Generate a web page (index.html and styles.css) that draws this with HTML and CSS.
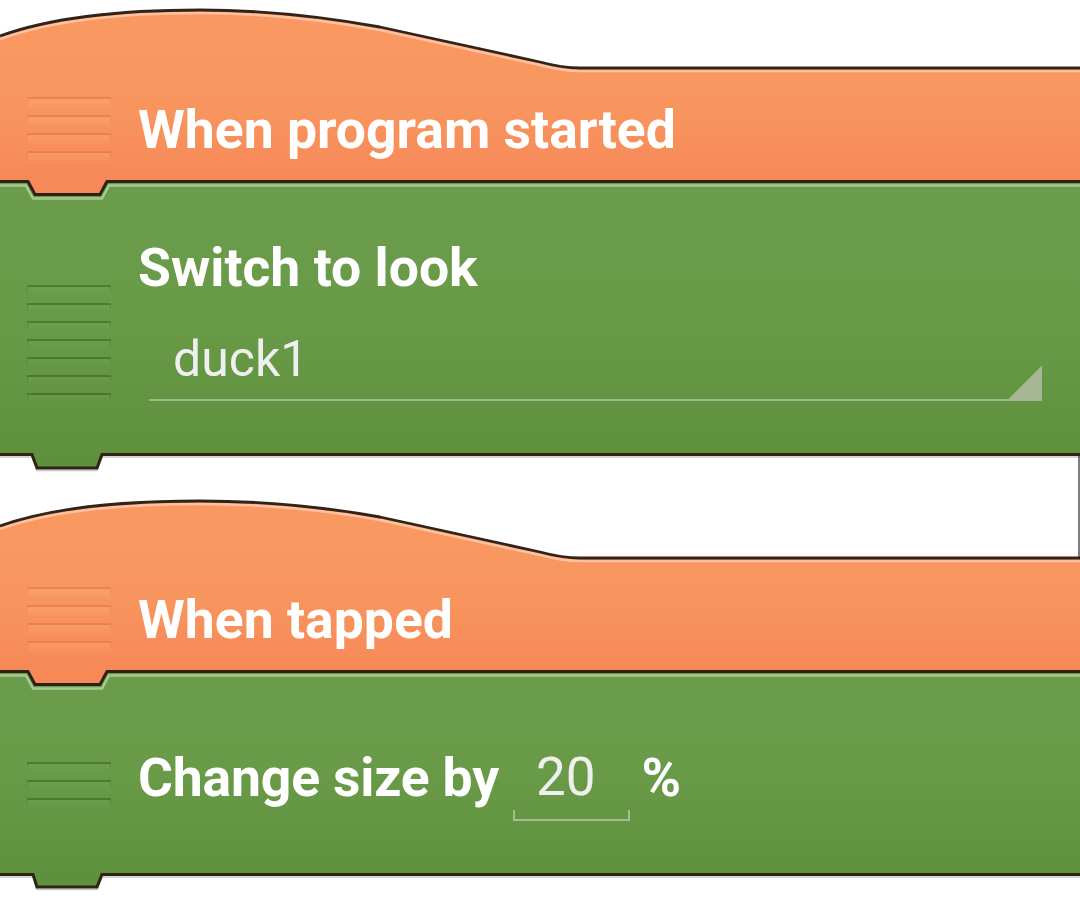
FILE: index.html
```html
<!DOCTYPE html>
<html lang="en">
<head>
<meta charset="utf-8">
<title>Script</title>
<link rel="stylesheet" href="styles.css">
</head>
<body>
<main class="canvas">

  <section class="block hat hat-1">
    <svg class="shape" width="1080" height="200" viewBox="0 0 1080 200">
      <defs>
        <linearGradient id="og1" x1="0" y1="0" x2="0" y2="182" gradientUnits="userSpaceOnUse">
          <stop offset="0" stop-color="#f99a62"/>
          <stop offset="0.6" stop-color="#f8955e"/>
          <stop offset="1" stop-color="#f78858"/>
        </linearGradient>
      </defs>
      <path fill="url(#og1)" d="M0,36 C50,18 120,10 200,10 C270,10 330,18 380,27 L540,62 C555,66 565,68 580,68 H1080 V181 H107 L100,194 H35 L28,181 H0 Z"/>
      <path fill="none" stroke="#fcc29f" stroke-width="2.5" transform="translate(0,3)" d="M0,36 C50,18 120,10 200,10 C270,10 330,18 380,27 L540,62 C555,66 565,68 580,68 H1080"/>
      <path fill="none" stroke="#33221a" stroke-width="2.8" d="M0,36 C50,18 120,10 200,10 C270,10 330,18 380,27 L540,62 C555,66 565,68 580,68 H1080"/>
      <path fill="none" stroke="#2e2217" stroke-width="3" d="M0,181.5 H28 L35,194.5 H100 L107,181.5 H1080"/>
    </svg>
    <div class="row row-hat">
      <div class="handle handle-orange"><i></i><i></i><i></i><i></i></div>
      <span class="label">When program started</span>
    </div>
  </section>

  <section class="block brick brick-look">
    <svg class="shape" width="1080" height="292" viewBox="0 0 1080 292">
      <defs>
        <linearGradient id="gg1" x1="0" y1="0" x2="0" y2="274" gradientUnits="userSpaceOnUse">
          <stop offset="0" stop-color="#6b9c4b"/>
          <stop offset="0.5" stop-color="#689a48"/>
          <stop offset="1" stop-color="#5f903e"/>
        </linearGradient>
      </defs>
      <path fill="url(#gg1)" d="M0,0 H1080 V272 H102 L97,286 H37 L32,272 H0 Z"/>
      <path fill="none" stroke="#a8c98f" stroke-width="2.5" d="M0,3.5 H26 L33,16.5 H102 L109,3.5 H1080"/>
      <path fill="none" stroke="rgba(0,0,0,0.22)" stroke-width="1.5" transform="translate(0,2.5)" d="M0,272.5 H32 L37,286 H97 L102,272.5 H1080"/>
      <path fill="none" stroke="#2d2414" stroke-width="3" d="M0,272.5 H32 L37,286 H97 L102,272.5 H1080"/>
    </svg>
    <div class="row row-look">
      <div class="handle handle-green handle-look"><i></i><i></i><i></i><i></i><i></i><i></i><i></i></div>
      <div class="column">
        <span class="label">Switch to look</span>
        <div class="dropdown"><span class="value value-dropdown">duck1</span></div>
      </div>
    </div>
  </section>

  <div class="spacer"></div>

  <section class="block hat hat-2">
    <svg class="shape" width="1080" height="200" viewBox="0 0 1080 200">
      <defs>
        <linearGradient id="og2" x1="0" y1="0" x2="0" y2="182" gradientUnits="userSpaceOnUse">
          <stop offset="0" stop-color="#f99a62"/>
          <stop offset="0.6" stop-color="#f8955e"/>
          <stop offset="1" stop-color="#f78858"/>
        </linearGradient>
      </defs>
      <line x1="1079" y1="0" x2="1079" y2="68" stroke="#7e7e7e" stroke-width="2"/>
      <path fill="url(#og2)" d="M0,36 C50,18 120,11 200,11 C270,11 330,18 380,27 L540,62 C555,66 565,68 580,68 H1080 V181 H107 L100,194 H35 L28,181 H0 Z"/>
      <path fill="none" stroke="#fcc29f" stroke-width="2.5" transform="translate(0,3)" d="M0,36 C50,18 120,11 200,11 C270,11 330,18 380,27 L540,62 C555,66 565,68 580,68 H1080"/>
      <path fill="none" stroke="#33221a" stroke-width="2.8" d="M0,36 C50,18 120,11 200,11 C270,11 330,18 380,27 L540,62 C555,66 565,68 580,68 H1080"/>
      <path fill="none" stroke="#2e2217" stroke-width="3" d="M0,181.5 H28 L35,194.5 H100 L107,181.5 H1080"/>
    </svg>
    <div class="row row-hat">
      <div class="handle handle-orange"><i></i><i></i><i></i><i></i></div>
      <span class="label">When tapped</span>
    </div>
  </section>

  <section class="block brick brick-size">
    <svg class="shape" width="1080" height="222" viewBox="0 0 1080 222">
      <defs>
        <linearGradient id="gg2" x1="0" y1="0" x2="0" y2="204" gradientUnits="userSpaceOnUse">
          <stop offset="0" stop-color="#6b9c4b"/>
          <stop offset="0.5" stop-color="#689a48"/>
          <stop offset="1" stop-color="#5f903e"/>
        </linearGradient>
      </defs>
      <path fill="url(#gg2)" d="M0,0 H1080 V202 H102 L97,215 H37 L32,202 H0 Z"/>
      <path fill="none" stroke="#a8c98f" stroke-width="2.5" d="M0,3.5 H26 L33,16.5 H102 L109,3.5 H1080"/>
      <path fill="none" stroke="rgba(0,0,0,0.22)" stroke-width="1.5" transform="translate(0,2.5)" d="M0,202.5 H33 L37,215 H97 L102,202.5 H1080"/>
      <path fill="none" stroke="#2d2414" stroke-width="3" d="M0,202.5 H33 L37,215 H97 L102,202.5 H1080"/>
    </svg>
    <div class="row row-size">
      <div class="handle handle-green handle-size"><i></i><i></i><i></i></div>
      <span class="label">Change size by</span>
      <span class="field"><span class="value">20</span></span>
      <span class="label label-unit">%</span>
    </div>
  </section>

</main>
</body>
</html>
```

FILE: styles.css
```css
html, body {
  margin: 0;
  padding: 0;
  background: #ffffff;
}

body {
  width: 1080px;
  height: 898px;
  overflow: hidden;
  font-family: Roboto, "Noto Sans", "Liberation Sans", sans-serif;
}

.canvas {
  display: flex;
  flex-direction: column;
  width: 1080px;
}

.block {
  position: relative;
  width: 1080px;
  flex: none;
}

.hat-1 { height: 182px; z-index: 4; }
.brick-look { height: 274px; z-index: 3; }
.hat-2 { height: 182px; z-index: 2; }
.brick-size { height: 204px; z-index: 1; }

.spacer {
  height: 34px;
  width: 1078px;
  border-right: 2px solid #7e7e7e;
  flex: none;
}

.shape {
  position: absolute;
  top: 0;
  left: 0;
  overflow: visible;
  display: block;
}

.row {
  position: relative;
  display: flex;
  padding-left: 27px;
  gap: 27px;
}

.row-hat {
  padding-top: 97px;
  align-items: center;
}

.row-look {
  padding-top: 59px;
  align-items: flex-start;
}

.row-size {
  padding-top: 79px;
  align-items: flex-start;
  gap: 0;
}

/* drag handle grooves */
.handle {
  width: 84px;
  display: flex;
  flex-direction: column;
  gap: 7px;
  flex: none;
}

.handle i {
  display: block;
  height: 9px;
}

.handle-orange i {
  border-top: 2px solid rgba(196, 78, 20, 0.28);
  background:
    linear-gradient(rgba(190, 70, 10, 0.22), rgba(190, 70, 10, 0)) left top / 1px 100% no-repeat,
    linear-gradient(rgba(190, 70, 10, 0.22), rgba(190, 70, 10, 0)) right top / 1px 100% no-repeat,
    linear-gradient(rgba(255, 200, 160, 0.2), rgba(255, 200, 160, 0.05));
}

.handle-green i {
  border-top: 2px solid rgba(40, 80, 20, 0.42);
  background:
    linear-gradient(rgba(40, 80, 20, 0.28), rgba(40, 80, 20, 0)) left top / 1px 100% no-repeat,
    linear-gradient(rgba(40, 80, 20, 0.28), rgba(40, 80, 20, 0)) right top / 1px 100% no-repeat,
    linear-gradient(rgba(255, 255, 255, 0.04), rgba(255, 255, 255, 0));
}

.handle-look { margin-top: 44px; }
.handle-size { margin-top: 11px; margin-right: 27px; }

.label {
  font-weight: 700;
  font-size: 53.5px;
  line-height: 53px;
  color: #ffffff;
  white-space: nowrap;
}

.row-size > .label:not(.label-unit) {
  letter-spacing: -0.2px;
}

.label-unit {
  margin-left: 12px;
}

.column {
  display: flex;
  flex-direction: column;
}

.dropdown {
  position: relative;
  margin-top: 40px;
  margin-left: 11px;
  width: 869px;
  padding: 0 0 15px 24px;
  border-bottom: 2px solid #9fb58c;
}

.dropdown::after {
  content: "";
  position: absolute;
  right: 0;
  bottom: -2px;
  width: 35px;
  height: 36px;
  background: linear-gradient(to bottom right, transparent 50%, #a4b692 50%);
}

.value {
  font-weight: 400;
  font-size: 53px;
  line-height: 53px;
  color: #efefef;
  white-space: nowrap;
  display: block;
}

.value-dropdown {
  font-size: 50px;
  line-height: 50px;
}

.field {
  position: relative;
  margin-left: 14px;
  padding: 0 34px 17px 23px;
}

.field::after {
  content: "";
  position: absolute;
  left: 0;
  right: 0;
  bottom: 0;
  height: 9px;
  border: 2px solid #a6bd93;
  border-top: none;
}
```
